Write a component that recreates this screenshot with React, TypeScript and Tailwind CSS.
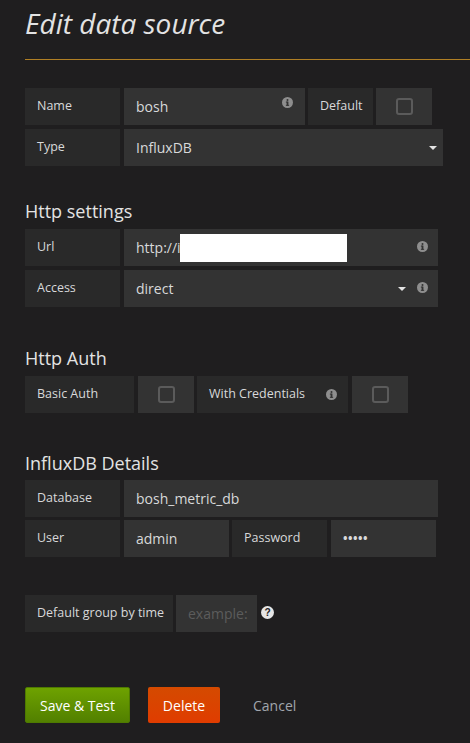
import React from 'react';

const font = { fontFamily: '"Open Sans", "Noto Sans", sans-serif' };

function InfoIcon() {
  return (
    <svg width="11" height="11" viewBox="0 0 12 12" className="shrink-0">
      <circle cx="6" cy="6" r="6" fill="#8e8e8e" />
      <rect x="5" y="5" width="2" height="4.5" fill="#333333" />
      <rect x="4.2" y="5" width="2" height="1.1" fill="#333333" />
      <rect x="4.2" y="8.6" width="3.6" height="1" fill="#333333" />
      <circle cx="6" cy="3.3" r="1.1" fill="#333333" />
    </svg>
  );
}

function Caret() {
  return (
    <svg width="8" height="4" viewBox="0 0 8 4" className="shrink-0">
      <path d="M0 0 L8 0 L4 4 Z" fill="#e3e3e3" />
    </svg>
  );
}

function Label({ w, children }: { w: string; children: React.ReactNode }) {
  return (
    <div className={`${w} h-[37px] bg-[#292929] text-[#d8d9da] text-[12.5px] whitespace-nowrap flex items-center px-3 shrink-0`}>
      {children}
    </div>
  );
}

function Box({ w, children, className = '', muted = false }: { w: string; children?: React.ReactNode; className?: string; muted?: boolean }) {
  return (
    <div className={`${w} h-[37px] bg-[#333333] ${muted ? 'text-[#5c5c5c]' : 'text-[#d8d9da]'} text-[14px] whitespace-nowrap flex items-center px-3 shrink-0 ${className}`}>
      {children}
    </div>
  );
}

function CheckBox({ w }: { w: string }) {
  return (
    <Box w={w} className="justify-center">
      <div className="w-[17px] h-[17px] rounded-[3px] border-2 border-[#5b5b5b]" />
    </Box>
  );
}

export default function App() {
  return (
    <div className="w-[470px] h-[743px] bg-[#1f1e1f] overflow-hidden" style={font}>
      <div className="pl-[25px] pt-[3px]">
        <h1 className="text-[28px] italic text-[#e3e3e3] leading-[40px]">Edit data source</h1>
      </div>
      <div className="ml-[25px] mt-[16px] h-px bg-[#b07f24]" />

      <div className="pl-[25px] pt-[28px]">
        <div className="flex">
          <Label w="w-[95px]">Name</Label>
          <Box w="w-[181px] ml-[4px] justify-between">
            <span>bosh</span>
            <span className="-mt-[8px]"><InfoIcon /></span>
          </Box>
          <Label w="w-[65px] ml-[3px]">Default</Label>
          <CheckBox w="w-[56px] ml-[3px]" />
        </div>
        <div className="flex mt-[4px]">
          <Label w="w-[95px]">Type</Label>
          <Box w="w-[319px] ml-[4px] justify-between pr-[6px]">
            <span>InfluxDB</span>
            <Caret />
          </Box>
        </div>

        <h2 className="text-[18px] text-[#e3e3e3] leading-[24px] mt-[33px] mb-[6px]">Http settings</h2>
        <div className="flex">
          <Label w="w-[95px]">Url</Label>
          <Box w="w-[314px] ml-[4px] justify-between pr-[10px]">
            <span className="flex items-center">
              http://i
              <span className="inline-block w-[167px] h-[28px] bg-white -ml-[1px]" />
            </span>
            <span className="-mt-[3px]"><InfoIcon /></span>
          </Box>
        </div>
        <div className="flex mt-[4px]">
          <Label w="w-[95px]">Access</Label>
          <Box w="w-[314px] ml-[4px] pr-[10px]">
            <span className="flex-1">direct</span>
            <Caret />
            <span className="ml-[11px] -mt-[3px]"><InfoIcon /></span>
          </Box>
        </div>

        <h2 className="text-[18px] text-[#e3e3e3] leading-[24px] mt-[39px] mb-[6px]">Http Auth</h2>
        <div className="flex">
          <Label w="w-[109px]">Basic Auth</Label>
          <CheckBox w="w-[56px] ml-[4px]" />
          <Label w="w-[151px] ml-[3px] justify-between pr-[11px]">
            <span>With Credentials</span>
            <InfoIcon />
          </Label>
          <CheckBox w="w-[56px] ml-[4px]" />
        </div>

        <h2 className="text-[18px] text-[#e3e3e3] leading-[24px] mt-[38px] mb-[5px]">InfluxDB Details</h2>
        <div className="flex">
          <Label w="w-[95px]">Database</Label>
          <Box w="w-[314px] ml-[4px]">bosh_metric_db</Box>
        </div>
        <div className="flex mt-[3px]">
          <Label w="w-[95px]">User</Label>
          <Box w="w-[105px] ml-[4px]">admin</Box>
          <Label w="w-[95px] ml-[3px]">Password</Label>
          <Box w="w-[105px] ml-[4px]">
            <span className="text-[12px] font-bold tracking-[0.5px]">•••••</span>
          </Box>
        </div>

        <div className="flex items-center mt-[38px]">
          <Label w="w-[148px]">Default group by time</Label>
          <Box w="w-[81px] ml-[3px] overflow-hidden" muted>example:</Box>
          <svg width="13" height="13" viewBox="0 0 14 14" className="ml-[4px] -mt-[2px]">
            <circle cx="7" cy="7" r="7" fill="#e6e6e6" />
            <text x="7" y="11" textAnchor="middle" fontSize="11" fontWeight="bold" fill="#1f1e1f" fontFamily="Liberation Sans, sans-serif">?</text>
          </svg>
        </div>

        <div className="flex items-center mt-[55px]">
          <button className="w-[105px] h-[36px] rounded-[2px] text-white text-[14px] bg-gradient-to-b from-[#6ea200] to-[#528000] border border-[#4e7a00]">
            Save &amp; Test
          </button>
          <button className="w-[72px] h-[36px] ml-[18px] rounded-[2px] text-white text-[14px] bg-gradient-to-b from-[#d44a00] to-[#e03c00]">
            Delete
          </button>
          <span className="ml-[33px] text-[14px] text-[#a1a6ad]">Cancel</span>
        </div>
      </div>
    </div>
  );
}
